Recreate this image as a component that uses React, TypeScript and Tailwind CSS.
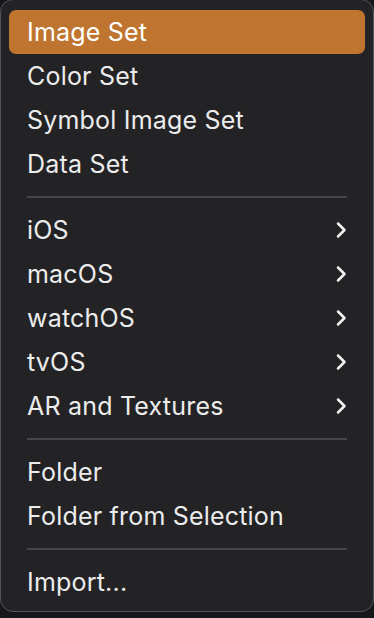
import * as React from 'react';

type Entry =
  | { kind: 'item'; label: string; submenu?: boolean; active?: boolean }
  | { kind: 'sep' };

const entries: Entry[] = [
  { kind: 'item', label: 'Image Set', active: true },
  { kind: 'item', label: 'Color Set' },
  { kind: 'item', label: 'Symbol Image Set' },
  { kind: 'item', label: 'Data Set' },
  { kind: 'sep' },
  { kind: 'item', label: 'iOS', submenu: true },
  { kind: 'item', label: 'macOS', submenu: true },
  { kind: 'item', label: 'watchOS', submenu: true },
  { kind: 'item', label: 'tvOS', submenu: true },
  { kind: 'item', label: 'AR and Textures', submenu: true },
  { kind: 'sep' },
  { kind: 'item', label: 'Folder' },
  { kind: 'item', label: 'Folder from Selection' },
  { kind: 'sep' },
  { kind: 'item', label: 'Import...' },
];

function Chevron() {
  return (
    <svg width="12" height="18" viewBox="0 0 12 18" fill="none">
      <path
        d="M3 2.5l6.5 6.5-6.5 6.5"
        stroke="#f2f2f2"
        strokeWidth="2.5"
        strokeLinecap="round"
        strokeLinejoin="round"
      />
    </svg>
  );
}

export default function App() {
  return (
    <div className="h-[618px] w-[374px] overflow-hidden bg-[#17171a]">
      <div className="-mt-px flex h-[613px] w-[374px] flex-col rounded-[13px] border border-[#55555a] bg-[#232326] px-[8px] pt-[10px] font-['Inter',sans-serif] text-[25px] text-[#ececec]">
        {entries.map((e, i) =>
          e.kind === 'sep' ? (
            <div key={i} className="flex h-[22px] items-center px-[18px]">
              <div className="h-[2px] w-full bg-[#47474a]" />
            </div>
          ) : (
            <div
              key={i}
              className={
                'flex h-[44px] items-center justify-between rounded-[7px] pl-[18px] pr-[18px] ' +
                (e.active ? 'bg-[#bf7530] text-white' : '')
              }
            >
              <span className="pt-[2px] tracking-[0.2px]">{e.label}</span>
              {e.submenu && <Chevron />}
            </div>
          )
        )}
      </div>
    </div>
  );
}
